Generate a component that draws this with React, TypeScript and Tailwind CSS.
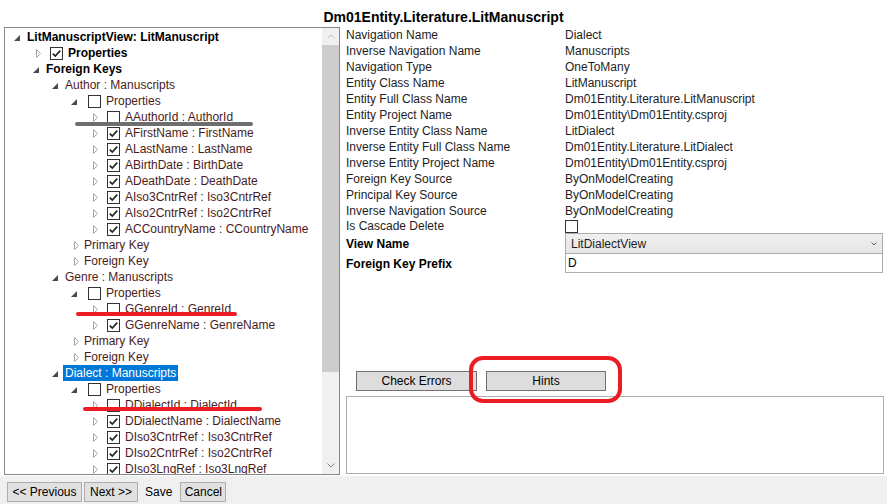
import React from "react";

type Row = {
  level: number;
  exp: "open" | "closed";
  check?: boolean;
  bold?: boolean;
  selected?: boolean;
  text: string;
};

const rows: Row[] = [
  { level: 0, exp: "open", bold: true, text: "LitManuscriptView: LitManuscript" },
  { level: 1, exp: "closed", check: true, bold: true, text: "Properties" },
  { level: 1, exp: "open", bold: true, text: "Foreign Keys" },
  { level: 2, exp: "open", text: "Author : Manuscripts" },
  { level: 3, exp: "open", check: false, text: "Properties" },
  { level: 4, exp: "closed", check: false, text: "AAuthorId : AuthorId" },
  { level: 4, exp: "closed", check: true, text: "AFirstName : FirstName" },
  { level: 4, exp: "closed", check: true, text: "ALastName : LastName" },
  { level: 4, exp: "closed", check: true, text: "ABirthDate : BirthDate" },
  { level: 4, exp: "closed", check: true, text: "ADeathDate : DeathDate" },
  { level: 4, exp: "closed", check: true, text: "AIso3CntrRef : Iso3CntrRef" },
  { level: 4, exp: "closed", check: true, text: "AIso2CntrRef : Iso2CntrRef" },
  { level: 4, exp: "closed", check: true, text: "ACCountryName : CCountryName" },
  { level: 3, exp: "closed", text: "Primary Key" },
  { level: 3, exp: "closed", text: "Foreign Key" },
  { level: 2, exp: "open", text: "Genre : Manuscripts" },
  { level: 3, exp: "open", check: false, text: "Properties" },
  { level: 4, exp: "closed", check: false, text: "GGenreId : GenreId" },
  { level: 4, exp: "closed", check: true, text: "GGenreName : GenreName" },
  { level: 3, exp: "closed", text: "Primary Key" },
  { level: 3, exp: "closed", text: "Foreign Key" },
  { level: 2, exp: "open", selected: true, text: "Dialect : Manuscripts" },
  { level: 3, exp: "open", check: false, text: "Properties" },
  { level: 4, exp: "closed", check: false, text: "DDialectId : DialectId" },
  { level: 4, exp: "closed", check: true, text: "DDialectName : DialectName" },
  { level: 4, exp: "closed", check: true, text: "DIso3CntrRef : Iso3CntrRef" },
  { level: 4, exp: "closed", check: true, text: "DIso2CntrRef : Iso2CntrRef" },
  { level: 4, exp: "closed", check: true, text: "DIso3LngRef : Iso3LngRef" },
];

const props: [string, string][] = [
  ["Navigation Name", "Dialect"],
  ["Inverse Navigation Name", "Manuscripts"],
  ["Navigation Type", "OneToMany"],
  ["Entity Class Name", "LitManuscript"],
  ["Entity Full Class Name", "Dm01Entity.Literature.LitManuscript"],
  ["Entity Project Name", "Dm01Entity\\Dm01Entity.csproj"],
  ["Inverse Entity Class Name", "LitDialect"],
  ["Inverse Entity Full Class Name", "Dm01Entity.Literature.LitDialect"],
  ["Inverse Entity Project Name", "Dm01Entity\\Dm01Entity.csproj"],
  ["Foreign Key Source", "ByOnModelCreating"],
  ["Principal Key Source", "ByOnModelCreating"],
  ["Inverse Navigation Source", "ByOnModelCreating"],
];

function CheckBox({ checked }: { checked: boolean }) {
  return (
    <div className="flex h-[13px] w-[13px] shrink-0 items-center justify-center border border-[#333333] bg-white">
      {checked && (
        <svg width="11" height="11" viewBox="0 0 11 11">
          <path d="M1.8 5.6 L4.3 8.1 L9.2 2.6" fill="none" stroke="#222222" strokeWidth="1.6" />
        </svg>
      )}
    </div>
  );
}

function Expander({ exp }: { exp: "open" | "closed" }) {
  return (
    <div className="flex h-[16px] w-[19px] shrink-0 items-center">
      {exp === "open" ? (
        <svg width="6" height="6" viewBox="0 0 6 6" className="ml-[6px] mt-[1px]">
          <path d="M6 0 V6 H0 Z" fill="#4a4a4a" />
        </svg>
      ) : (
        <svg width="5" height="9" viewBox="0 0 5 9" className="ml-[9px]">
          <path d="M0.5 0.5 L4.5 4.5 L0.5 8.5 Z" fill="white" stroke="#a6a6a6" />
        </svg>
      )}
    </div>
  );
}

function TreeRow({ row }: { row: Row }) {
  const hasCheck = row.check !== undefined;
  return (
    <div className="flex h-[16px] items-center whitespace-nowrap">
      <div className="shrink-0" style={{ width: 3 + row.level * 19 }} />
      <Expander exp={row.exp} />
      {hasCheck && (
        <div className="ml-[4px]">
          <CheckBox checked={!!row.check} />
        </div>
      )}
      <span
        className={
          (hasCheck ? "ml-[3px] " : "-ml-[2px] ") +
          "px-[2px] leading-[16px] " +
          (row.selected
            ? "bg-[#0078d7] text-white"
            : row.bold
              ? "font-bold text-black"
              : "text-[#4b1b1b]")
        }
      >
        {row.text}
      </span>
    </div>
  );
}

function Chevron({ up, color }: { up?: boolean; color: string }) {
  return (
    <svg width="8" height="5" viewBox="0 0 8 5">
      <path d={up ? "M0.5 4.5 L4 1 L7.5 4.5" : "M0.5 0.5 L4 4 L7.5 0.5"} fill="none" stroke={color} />
    </svg>
  );
}

function Tree() {
  return (
    <div className="flex h-[448px] w-[336px] shrink-0 border border-[#828790] bg-white">
      <div className="flex-1 overflow-hidden pt-[1px]">
        {rows.map((r, i) => (
          <TreeRow key={i} row={r} />
        ))}
      </div>
      <div className="flex w-[17px] flex-col bg-[#f0f0f0]">
        <div className="flex h-[17px] items-center justify-center">
          <Chevron up color="#c2c2c2" />
        </div>
        <div className="h-[327px] bg-[#cdcdcd]" />
        <div className="flex-1" />
        <div className="flex h-[17px] items-center justify-center">
          <Chevron color="#858585" />
        </div>
      </div>
    </div>
  );
}

function Details() {
  return (
    <div className="ml-[6px] flex w-[538px] flex-col">
      {props.map(([k, v]) => (
        <div key={k} className="grid h-[16px] grid-cols-[219px_1fr] leading-[16px] whitespace-nowrap">
          <span>{k}</span>
          <span>{v}</span>
        </div>
      ))}
      <div className="grid h-[14px] grid-cols-[219px_1fr] items-center leading-[14px]">
        <span>Is Cascade Delete</span>
        <CheckBox checked={false} />
      </div>
      <div className="grid h-[21px] grid-cols-[219px_1fr] items-center">
        <span className="font-bold text-black">View Name</span>
        <div className="flex h-[21px] w-[318px] items-center justify-between border border-[#acacac] bg-gradient-to-b from-[#f0f0f0] to-[#e5e5e5] pl-[5px] pr-[5px]">
          <span>LitDialectView</span>
          <svg width="6" height="4" viewBox="0 0 6 4">
            <path d="M0.5 0.5 L3 3 L5.5 0.5" fill="none" stroke="#606060" />
          </svg>
        </div>
      </div>
      <div className="grid h-[19px] grid-cols-[219px_1fr] items-center">
        <span className="font-bold text-black">Foreign Key Prefix</span>
        <div className="flex h-[19px] w-[318px] items-center border border-t-0 border-[#abadb3] bg-white pl-[2px] text-black">
          D
        </div>
      </div>
      <div className="mt-[98px] flex h-[20px] text-black">
        <button className="ml-[10px] h-[20px] w-[121px] border border-[#707070] bg-[#dddddd]">Check Errors</button>
        <button className="ml-[9px] h-[20px] w-[120px] border border-[#707070] bg-[#dddddd]">Hints</button>
      </div>
      <div className="mt-[5px] h-[78px] w-[538px] border border-[#abadb3] bg-white" />
    </div>
  );
}

export default function App() {
  return (
    <div className="relative flex h-[504px] w-[887px] flex-col overflow-hidden bg-white font-[family-name:Liberation_Sans,Arial,sans-serif] text-[12px] text-[#1e1e1e]">
      <div className="h-[27px] pt-[8px] text-center text-[14px] leading-[19px] font-bold text-black">
        Dm01Entity.Literature.LitManuscript
      </div>
      <div className="flex h-[449px] pl-[4px]">
        <Tree />
        <Details />
      </div>
      <div className="flex flex-1 items-start bg-[#f0f0f0] pl-[7px] pt-[6px] text-black">
        <button className="h-[20px] w-[75px] border border-[#adadad] bg-[#e1e1e1]">&lt;&lt; Previous</button>
        <button className="ml-[2px] h-[20px] w-[54px] border border-[#adadad] bg-[#e1e1e1]">Next &gt;&gt;</button>
        <span className="ml-[7px] leading-[20px]">Save</span>
        <button className="ml-[8px] h-[20px] w-[46px] border border-[#adadad] bg-[#e1e1e1]">Cancel</button>
      </div>

      {/* hand-drawn annotations over the screenshot */}
      <div className="absolute left-[75px] top-[122px] h-[4px] w-[178px] rounded-full bg-[#6e6e6e]" />
      <div className="absolute left-[76px] top-[312px] h-[4px] w-[161px] rounded-full bg-[#ed1c24]" />
      <div className="absolute left-[83px] top-[407px] h-[4px] w-[179px] rounded-full bg-[#ed1c24]" />
      <div className="absolute left-[469px] top-[356px] h-[47px] w-[153px] rounded-[14px] border-[4px] border-[#ed1c24]" />
    </div>
  );
}
